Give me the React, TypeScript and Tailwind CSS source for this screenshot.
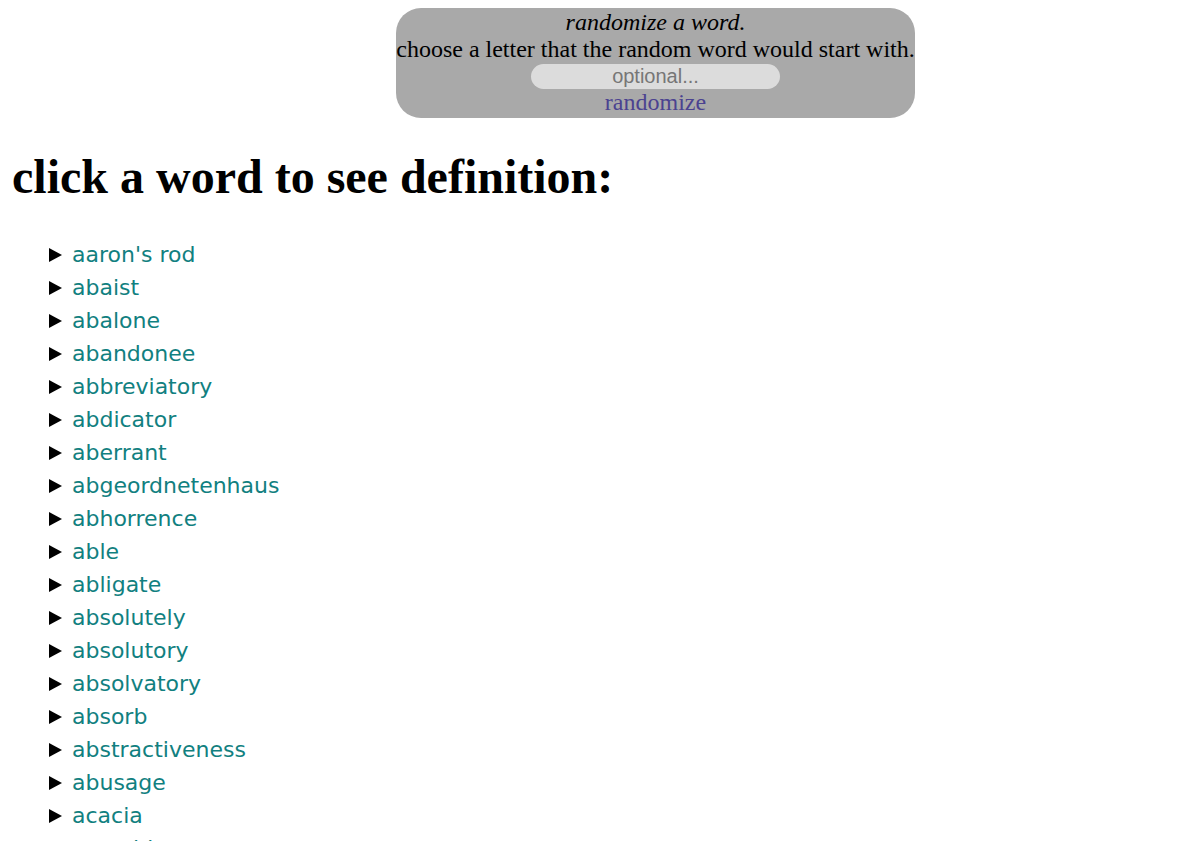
import React from "react";

const words = [
  "aaron's rod",
  "abaist",
  "abalone",
  "abandonee",
  "abbreviatory",
  "abdicator",
  "aberrant",
  "abgeordnetenhaus",
  "abhorrence",
  "able",
  "abligate",
  "absolutely",
  "absolutory",
  "absolvatory",
  "absorb",
  "abstractiveness",
  "abusage",
  "acacia",
  "acaroid",
];

export default function App() {
  return (
    <div className="min-h-[841px] bg-white px-[8px] pt-[8px] text-black [font-family:'Liberation_Serif',serif]">
      <div className="flex justify-center">
        <div className="ml-[113px] flex w-[519px] flex-col items-center rounded-[25px] bg-[#a9a9a9] pt-[1px] pb-[2px] text-[24px] leading-[27px]">
          <div className="italic">randomize a word.</div>
          <div className="whitespace-nowrap">choose a letter that the random word would start with.</div>
          <input
            placeholder="optional..."
            className="mt-[1px] h-[25px] w-[249px] rounded-full bg-[#dcdcdc] text-center text-[20px] text-black outline-none placeholder:text-[#767676] [font-family:'Liberation_Sans',sans-serif]"
          />
          <a className="leading-[27px] text-[#4b4290]">randomize</a>
        </div>
      </div>
      <h1 className="mt-[31px] pl-[4px] text-[48px] font-bold leading-[55px]">click a word to see definition:</h1>
      <ul className="mt-[34px] pl-[41px]">
        {words.map((w) => (
          <li key={w} className="flex h-[33px] items-center">
            <svg width="13" height="14" viewBox="0 0 13 14" className="mr-[10px] shrink-0">
              <path d="M0 0 L13 7 L0 14 Z" fill="#000" />
            </svg>
            <span className="text-[22px] text-[#118080] [font-family:'Comic_Sans_MS','DejaVu_Sans',sans-serif]">{w}</span>
          </li>
        ))}
      </ul>
    </div>
  );
}
